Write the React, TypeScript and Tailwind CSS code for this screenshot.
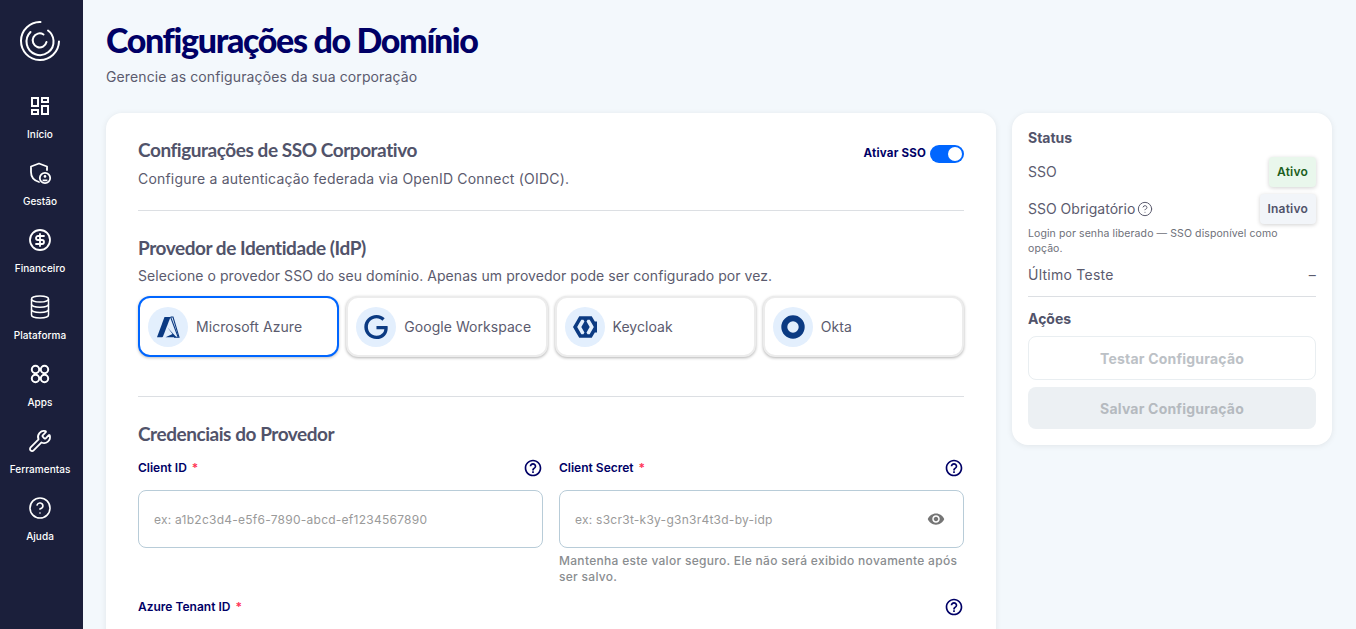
import type { ReactNode } from "react";
import { CircleDollarSign, CircleHelp, Wrench } from "lucide-react";
import { SiGoogle, SiKeycloak } from "react-icons/si";

const helpPath =
  "M11 18h2v-2h-2v2zm1-16C6.48 2 2 6.48 2 12s4.48 10 10 10 10-4.48 10-10S17.52 2 12 2zm0 18c-4.41 0-8-3.59-8-8s3.59-8 8-8 8 3.59 8 8-3.59 8-8 8zm0-14c-2.21 0-4 1.79-4 4h2c0-1.1.9-2 2-2s2 .9 2 2c0 2-3 1.75-3 5h2c0-2.25 3-2.5 3-5 0-2.21-1.79-4-4-4z";

function HelpIcon({ className }: { className?: string }) {
  return (
    <svg viewBox="0 0 24 24" fill="currentColor" className={className}>
      <path d={helpPath} />
    </svg>
  );
}

function Logo() {
  return (
    <svg viewBox="0 0 40 40" fill="none" stroke="white" strokeWidth="2" strokeLinecap="round" className="h-10 w-10">
      <path d="M20.5 1 A19 19 0 1 0 39 20.5" />
      <path d="M10.5 11 A13.5 13.5 0 1 0 33.5 19.5 A13.5 13.5 0 0 0 28 9.5" />
      <path d="M26.5 21 A7 7 0 1 1 23.5 13.5" />
    </svg>
  );
}

function DashboardIcon() {
  return (
    <svg viewBox="0 0 24 24" fill="white" className="h-6 w-6">
      <path d="M19 5v2h-4V5h4M9 5v6H5V5h4m10 8v6h-4v-6h4M9 17v2H5v-2h4M21 3h-8v6h8V3zM11 3H3v10h8V3zm10 8h-8v10h8V11zm-10 4H3v6h8v-6z" />
    </svg>
  );
}

function ShieldIcon() {
  return (
    <svg viewBox="0 0 24 24" fill="none" stroke="white" strokeWidth="1.8" className="h-6 w-6">
      <path d="M11 21c-4-1.2-8-4.5-8-10V5.5L11 2.5l8 3V9" strokeLinecap="round" strokeLinejoin="round" />
      <circle cx="17" cy="17" r="5.2" fill="#1b1f3b" />
      <circle cx="17" cy="15.4" r="1.3" fill="white" stroke="none" />
      <path d="M14.6 19.4h4.8" strokeWidth="1.8" />
    </svg>
  );
}

function DatabaseIcon() {
  return (
    <svg viewBox="0 0 24 24" fill="none" stroke="white" strokeWidth="1.5" className="h-6 w-6">
      <ellipse cx="12" cy="4" rx="8.5" ry="3" />
      <path d="M3.5 4v16c0 1.7 3.8 3 8.5 3s8.5-1.3 8.5-3V4" />
      <path d="M3.5 9.3c0 1.7 3.8 3 8.5 3s8.5-1.3 8.5-3" />
      <path d="M3.5 14.6c0 1.7 3.8 3 8.5 3s8.5-1.3 8.5-3" />
    </svg>
  );
}

function AppsIcon() {
  return (
    <svg viewBox="0 0 24 24" fill="none" stroke="white" strokeWidth="2" className="h-6 w-6">
      <circle cx="7.5" cy="7.5" r="3.7" />
      <circle cx="16.5" cy="7.5" r="3.7" />
      <circle cx="7.5" cy="16.5" r="3.7" />
      <circle cx="16.5" cy="16.5" r="3.7" />
    </svg>
  );
}

function NavItem({ icon, label }: { icon: ReactNode; label: string }) {
  return (
    <div className="flex h-[67px] w-full flex-col items-center pt-[7px]">
      <div className="flex h-6 w-6 items-center justify-center">{icon}</div>
      <span className="mt-[9px] text-[10px] leading-[14px] font-medium tracking-[0.05px] text-white">{label}</span>
    </div>
  );
}

function Sidebar() {
  return (
    <aside className="flex h-full w-[83px] shrink-0 flex-col items-center bg-[#1b1f3b] pr-[3px]">
      <div className="mt-[21px] mb-[26px] h-10 w-10">
        <Logo />
      </div>
      <NavItem icon={<DashboardIcon />} label="Início" />
      <NavItem icon={<ShieldIcon />} label="Gestão" />
      <NavItem icon={<CircleDollarSign className="h-6 w-6 text-white" strokeWidth={1.8} />} label="Financeiro" />
      <NavItem icon={<DatabaseIcon />} label="Plataforma" />
      <NavItem icon={<AppsIcon />} label="Apps" />
      <NavItem icon={<Wrench className="h-6 w-6 text-white" strokeWidth={1.8} />} label="Ferramentas" />
      <NavItem icon={<CircleHelp className="h-6 w-6 text-white" strokeWidth={1.6} />} label="Ajuda" />
    </aside>
  );
}

function AzureIcon() {
  return (
    <svg viewBox="0 0 24 24" className="h-[24px] w-[24px]">
      <path d="M8.5 2h6L7 21.5c-.2.5-.5.7-1 .7H1z" fill="#0b3a82" />
      <path d="M11.5 12.5l5 6.5-7 3.2h11z" fill="#0b3a82" />
      <path d="M14.6 2h2.4l6 20.2h-5" fill="none" stroke="#0b3a82" strokeWidth="1.1" />
      <path d="M14.6 2l7.6 20.2" fill="none" stroke="#0b3a82" strokeWidth="1.1" />
    </svg>
  );
}

function OktaIcon() {
  return (
    <svg viewBox="0 0 24 24" className="h-6 w-6">
      <circle cx="12" cy="12" r="8.7" fill="none" stroke="#0b3a82" strokeWidth="6" />
    </svg>
  );
}

function ProviderCard({ icon, label, selected }: { icon: ReactNode; label: string; selected?: boolean }) {
  return (
    <div
      className={
        selected
          ? "flex h-[61px] items-center gap-2 rounded-xl border-2 border-[#0066ff] bg-white pl-[8px] shadow-[0_1px_3px_rgba(0,0,0,0.25)]"
          : "flex h-[61px] items-center gap-2 rounded-xl border-2 border-[#ececec] bg-white pl-[8px] shadow-[0_1px_3px_rgba(0,0,0,0.3)]"
      }
    >
      <div className="flex h-10 w-10 shrink-0 items-center justify-center rounded-full bg-[#e3effd]">{icon}</div>
      <span className="text-sm tracking-[0.05px] text-[#5b5b6e]">{label}</span>
    </div>
  );
}

function FieldLabel({ label }: { label: string }) {
  return (
    <div className="flex h-5 items-center justify-between">
      <span className="text-xs font-semibold text-[#000066]">
        {label} <span className="ml-[2px] text-[#ff3355]">*</span>
      </span>
      <HelpIcon className="h-5 w-5 text-[#000066]" />
    </div>
  );
}

function TextInput({ placeholder, eye }: { placeholder: string; eye?: boolean }) {
  return (
    <div className="mt-[12px] flex h-[58px] items-center justify-between rounded-lg border border-[#b8ccd8] bg-white pr-[18px] pl-[15px]">
      <span className="pt-[2px] text-xs tracking-[0.25px] text-[#9a9a9a]">{placeholder}</span>
      {eye ? (
        <svg viewBox="0 0 24 24" fill="#757575" className="h-[18px] w-[18px]">
          <path d="M12 4.5C7 4.5 2.73 7.61 1 12c1.73 4.39 6 7.5 11 7.5s9.27-3.11 11-7.5c-1.73-4.39-6-7.5-11-7.5zM12 17c-2.76 0-5-2.24-5-5s2.24-5 5-5 5 2.24 5 5-2.24 5-5 5zm0-8c-1.66 0-3 1.34-3 3s1.34 3 3 3 3-1.34 3-3-1.34-3-3-3z" />
        </svg>
      ) : null}
    </div>
  );
}

function SsoCard() {
  return (
    <section className="w-[890px] shrink-0 rounded-2xl bg-white px-8 pt-[25px] shadow-[0_1px_6px_rgba(0,0,0,0.08)]">
      <div className="flex items-start justify-between">
        <div>
          <h2 className="font-['Lato',sans-serif] text-[19px] leading-6 font-bold tracking-[-0.45px] text-[#51536a]">Configurações de SSO Corporativo</h2>
          <p className="mt-[7px] text-sm leading-5 tracking-[0.2px] text-[#5b5b6e]">Configure a autenticação federada via OpenID Connect (OIDC).</p>
        </div>
        <div className="mt-[7px] flex items-center gap-1">
          <span className="text-[11.5px] font-bold tracking-[0.2px] text-[#000066]">Ativar SSO</span>
          <div className="flex h-[18px] w-[34px] items-center justify-end rounded-full bg-[#0066ff] pr-[2px]">
            <div className="h-[14px] w-[14px] rounded-full bg-white" />
          </div>
        </div>
      </div>
      <div className="mt-[21px] h-px bg-[#dcdfe3]" />
      <h2 className="mt-[25px] font-['Lato',sans-serif] text-[19px] leading-6 font-bold tracking-[-0.45px] text-[#51536a]">Provedor de Identidade (IdP)</h2>
      <p className="mt-[6px] text-sm leading-5 tracking-[0.06px] text-[#5b5b6e]">Selecione o provedor SSO do seu domínio. Apenas um provedor pode ser configurado por vez.</p>
      <div className="mt-[10px] grid grid-cols-4 gap-[7px]">
        <ProviderCard selected icon={<AzureIcon />} label="Microsoft Azure" />
        <ProviderCard icon={<SiGoogle className="h-6 w-6 text-[#0b3a82]" />} label="Google Workspace" />
        <ProviderCard icon={<SiKeycloak className="h-6 w-6 text-[#0b3a82]" />} label="Keycloak" />
        <ProviderCard icon={<OktaIcon />} label="Okta" />
      </div>
      <div className="mt-[39px] h-px bg-[#dcdfe3]" />
      <h2 className="mt-[25px] font-['Lato',sans-serif] text-[19px] leading-6 font-bold tracking-[-0.45px] text-[#51536a]">Credenciais do Provedor</h2>
      <div className="mt-[12px] grid grid-cols-2 gap-x-4">
        <div>
          <FieldLabel label="Client ID" />
          <TextInput placeholder="ex: a1b2c3d4-e5f6-7890-abcd-ef1234567890" />
        </div>
        <div>
          <FieldLabel label="Client Secret" />
          <TextInput eye placeholder="ex: s3cr3t-k3y-g3n3r4t3d-by-idp" />
          <p className="mt-[5px] text-xs leading-4 font-medium tracking-[0.3px] text-[#8a8d90]">Mantenha este valor seguro. Ele não será exibido novamente após ser salvo.</p>
        </div>
        <div className="col-span-2 mt-[12px]">
          <FieldLabel label="Azure Tenant ID" />
          <div className="h-10" />
        </div>
      </div>
    </section>
  );
}

function Badge({ children, className }: { children: ReactNode; className: string }) {
  return <span className={"rounded px-2 py-[6px] text-xs leading-[18px] font-semibold tracking-[0.2px] shadow-[0_1px_4px_rgba(0,0,0,0.18)] " + className}>{children}</span>;
}

function StatusCard() {
  return (
    <aside className="h-[332px] flex-1 rounded-2xl bg-white pt-[15px] pr-4 pl-4 shadow-[0_1px_6px_rgba(0,0,0,0.08)]">
      <h3 className="text-sm leading-5 font-bold text-[#51536a]">Status</h3>
      <div className="mt-[8px] flex h-[32px] items-center justify-between">
        <span className="text-sm text-[#5b5b6e]">SSO</span>
        <Badge className="bg-[#e9f7ec] text-[#1b5e20]">Ativo</Badge>
      </div>
      <div className="mt-[5px] flex h-[32px] items-center justify-between">
        <span className="flex items-center gap-[2px] text-sm text-[#5b5b6e]">
          SSO Obrigatório
          <CircleHelp className="h-4 w-4" strokeWidth={1.5} />
        </span>
        <Badge className="bg-[#f2f5f9] text-[#51536a]">Inativo</Badge>
      </div>
      <p className="mt-[1px] max-w-[270px] text-[10.5px] leading-[15px] tracking-[0.1px] text-[#6e7079]">Login por senha liberado — SSO disponível como opção.</p>
      <div className="mt-[9px] flex items-center justify-between text-sm leading-5 tracking-[0.25px] text-[#5b5b6e]">
        <span>Último Teste</span>
        <span>–</span>
      </div>
      <div className="mt-[11px] h-px bg-[#dcdfe3]" />
      <h3 className="mt-[12px] text-sm leading-5 font-bold text-[#51536a]">Ações</h3>
      <div className="mt-[7px] flex h-11 items-center justify-center rounded-lg border border-[#e9eef1] pt-px text-sm font-bold tracking-[0.2px] text-[#bcc1c6]">Testar Configuração</div>
      <div className="mt-[7px] flex h-[42px] items-center justify-center rounded-lg bg-[#ecf0f3] pt-px text-sm font-bold tracking-[0.2px] text-[#b5babf]">Salvar Configuração</div>
    </aside>
  );
}

export default function App() {
  return (
    <div className="flex h-screen overflow-hidden bg-[#f3f8fc] font-['Inter',sans-serif]">
      <Sidebar />
      <main className="min-w-0 flex-1 pr-6 pl-[23px]">
        <h1 className="mt-[20px] font-['Lato',sans-serif] text-[34px] leading-10 font-black tracking-[-1.35px] text-[#000066]">Configurações do Domínio</h1>
        <p className="mt-[7px] text-sm leading-5 tracking-[0.12px] text-[#5b5b6e]">Gerencie as configurações da sua corporação</p>
        <div className="mt-[26px] flex items-start gap-4">
          <SsoCard />
          <StatusCard />
        </div>
      </main>
    </div>
  );
}
